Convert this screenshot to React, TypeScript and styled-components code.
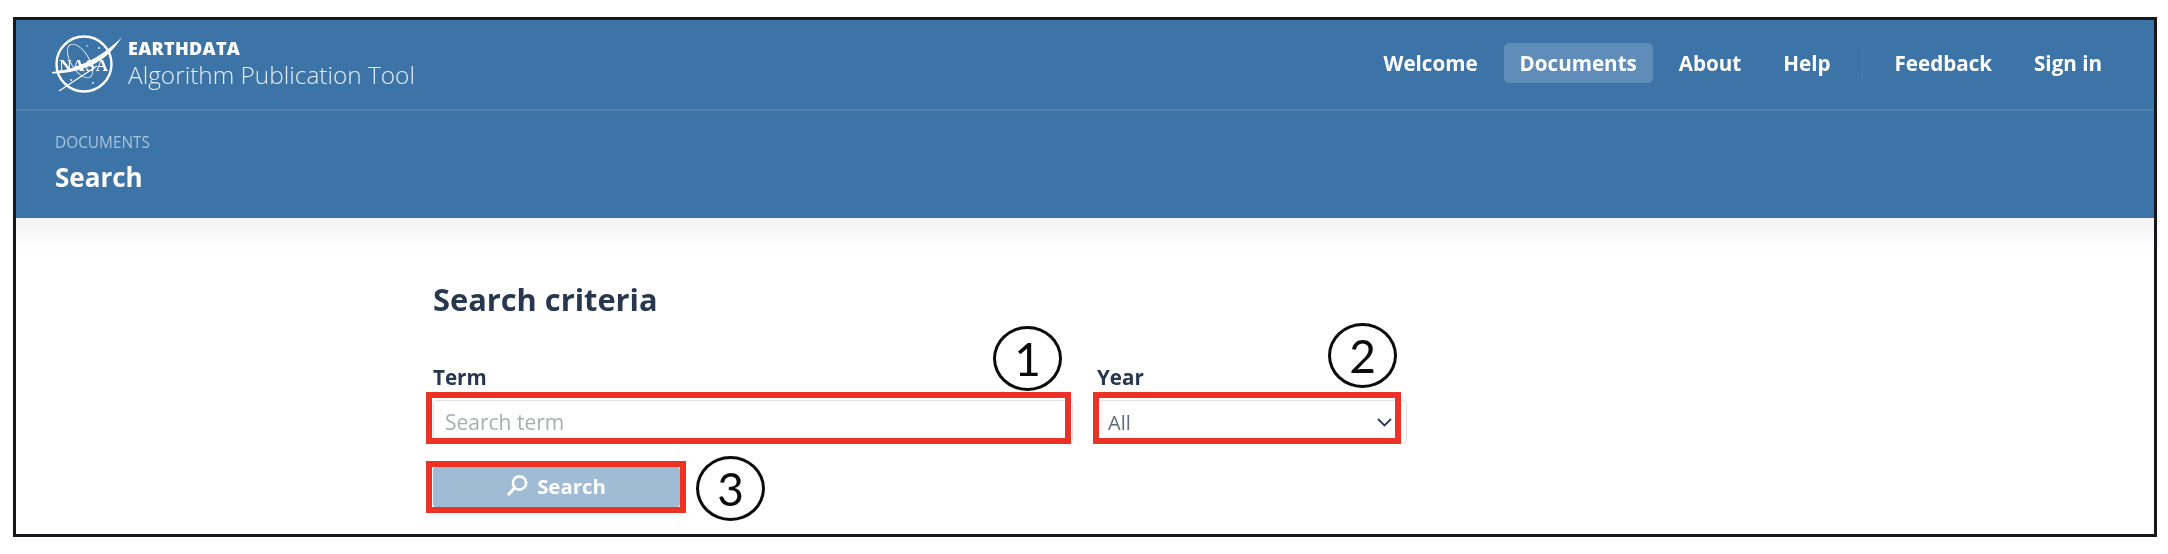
import React from "react";
import styled, { createGlobalStyle } from "styled-components";

const Global = createGlobalStyle`
  html, body { margin: 0; padding: 0; background: #fff; }
  body { font-family: "Open Sans", "Liberation Sans", sans-serif; }
  * { box-sizing: border-box; }
`;

const Frame = styled.div`
  margin: 17px 0 0 13px;
  width: 2144px;
  height: 520px;
  border: 3px solid #16181b;
  background: #fff;
  overflow: hidden;
  filter: blur(0.4px);
`;
const Header = styled.header`
  background: #3d74a7;
  height: 198px;
  color: #fff;
`;
const TopBar = styled.div`
  height: 91px;
  display: flex;
  align-items: center;
  justify-content: space-between;
  padding: 0 36px 0 39px;
  border-bottom: 2px solid #5080ae;
`;
const Brand = styled.div`
  display: flex;
  align-items: center;
  gap: 5px;
  margin-left: -4px;
`;
const BrandText = styled.div`
  display: flex;
  flex-direction: column;
  margin-top: -3px;
`;
const BrandTop = styled.span`
  font-size: 18px;
  font-weight: 800;
  line-height: 23px;
  letter-spacing: 0.3px;
`;
const BrandName = styled.span`
  font-size: 24.4px;
  font-weight: 300;
  line-height: 30px;
  color: #e6edf4;
`;
const Nav = styled.nav`
  display: flex;
  align-items: center;
  margin-top: -3px;
`;
const NavItem = styled.a<{ $active?: boolean }>`
  font-size: 20.6px;
  font-weight: 700;
  line-height: 40px;
  height: 40px;
  padding: 0 16px;
  margin-right: 10px;
  border-radius: 5px;
  color: #fff;
  background: ${(p) => (p.$active ? "#5f8cb8" : "transparent")};
  &:last-child { margin-right: 0; }
`;
const NavDivider = styled.span`
  width: 1px;
  height: 30px;
  background: #4b7eae;
  margin: 0 16px 0 5px;
`;
const SubBar = styled.div`
  padding: 22px 39px 0;
`;
const Crumb = styled.div`
  font-size: 15.4px;
  line-height: 20px;
  color: #a9c3dc;
`;
const PageTitle = styled.h1`
  margin: 7px 0 0;
  font-size: 26px;
  font-weight: 700;
  line-height: 34px;
`;
const Main = styled.main`
  position: relative;
  height: 319px;
  padding: 61px 0 0 417px;
  background: linear-gradient(#f3f3f3 0, #fff 34px);
`;
const Heading = styled.h2`
  margin: 0;
  font-size: 30.8px;
  font-weight: 700;
  line-height: 40px;
  color: #26374f;
`;
const FormRow = styled.div`
  display: flex;
  gap: 24px;
  margin-top: 45px;
`;
const Field = styled.div<{ $w: number }>`
  width: ${(p) => p.$w}px;
`;
const Label = styled.label`
  display: block;
  font-size: 20.6px;
  font-weight: 700;
  line-height: 26px;
  color: #26374f;
`;
const ControlWrap = styled.div`
  position: relative;
  margin-top: 10px;
  height: 44px;
`;
const TextInput = styled.input`
  width: 100%;
  height: 100%;
  border: 1px solid #dfe3e8;
  border-radius: 4px;
  padding: 0 11px;
  font: 400 21px "Open Sans", sans-serif;
  color: #44546a;
  background: #fff;
  &::placeholder { color: #a9adb2; opacity: 1; }
`;
const Select = styled.select`
  width: 100%;
  height: 100%;
  border: 1px solid #dfe3e8;
  border-radius: 4px;
  padding: 0 10px;
  appearance: none;
  font: 400 20px "Open Sans", sans-serif;
  color: #5d6b7e;
  background: #fff;
`;
const Chevron = styled.svg`
  position: absolute;
  right: 15px;
  top: 18px;
  width: 15px;
  height: 9px;
`;
const RedBox = styled.span<{ $t: number; $r: number; $b: number; $l: number }>`
  position: absolute;
  top: ${(p) => p.$t}px;
  right: ${(p) => p.$r}px;
  bottom: ${(p) => p.$b}px;
  left: ${(p) => p.$l}px;
  border: 6px solid #ec3224;
  pointer-events: none;
`;
const Badge = styled.span<{ $t: number; $r: number }>`
  position: absolute;
  top: ${(p) => p.$t}px;
  right: ${(p) => p.$r}px;
  width: 69px;
  height: 65px;
  border: 3px solid #0b0b0b;
  border-radius: 50%;
  display: flex;
  align-items: center;
  justify-content: center;
  font: 400 46px "Lato", sans-serif;
  color: #0b0b0b;
  background: transparent;
`;
const ButtonWrap = styled.div`
  position: relative;
  width: 247px;
  height: 40px;
  margin-top: 23px;
`;
const SearchButton = styled.button`
  width: 100%;
  height: 100%;
  border: 0;
  border-radius: 3px;
  padding: 0 0 3px;
  background: #a0bcd5;
  color: #fff;
  font: 700 20.4px "Open Sans", sans-serif;
  display: flex;
  align-items: center;
  justify-content: center;
  gap: 9px;
`;

const NasaLogo = () => (
  <svg width="72" height="62" viewBox="0 0 72 62" fill="none">
    <circle cx="33" cy="30" r="27.5" stroke="#fff" strokeWidth="2.4" />
    <path d="M1 38 C22 36 48 26 71 3 C58 24 38 39 1 39.5Z" fill="#fff" />
    <ellipse cx="29" cy="27" rx="9" ry="19" transform="rotate(-32 29 27)" stroke="#dfe8f1" strokeWidth="0.9" />
    <path d="M8 57 L46 32" stroke="#fff" strokeWidth="1.2" />
    <text x="33" y="37" textAnchor="middle" fontFamily="Liberation Serif, serif" fontWeight="700" fontSize="17" letterSpacing="0.8" fill="#fff">NASA</text>
    <circle cx="48" cy="14" r="0.9" fill="#fff" /><circle cx="20" cy="46" r="0.9" fill="#fff" /><circle cx="42" cy="49" r="0.9" fill="#fff" /><circle cx="36" cy="12" r="0.8" fill="#fff" />
  </svg>
);

const SearchIcon = () => (
  <svg width="21" height="21" viewBox="0 0 21 21" fill="none" stroke="#fff" strokeWidth="2.6">
    <circle cx="12.5" cy="8" r="6.6" />
    <path d="M7.5 13 L2 19" strokeWidth="3.2" strokeLinecap="round" />
  </svg>
);

export default function App() {
  return (
    <>
      <Global />
      <Frame>
        <Header>
          <TopBar>
            <Brand>
              <NasaLogo />
              <BrandText>
                <BrandTop>EARTHDATA</BrandTop>
                <BrandName>Algorithm Publication Tool</BrandName>
              </BrandText>
            </Brand>
            <Nav>
              <NavItem>Welcome</NavItem>
              <NavItem $active>Documents</NavItem>
              <NavItem>About</NavItem>
              <NavItem>Help</NavItem>
              <NavDivider />
              <NavItem>Feedback</NavItem>
              <NavItem>Sign in</NavItem>
            </Nav>
          </TopBar>
          <SubBar>
            <Crumb>DOCUMENTS</Crumb>
            <PageTitle>Search</PageTitle>
          </SubBar>
        </Header>
        <Main>
          <Heading>Search criteria</Heading>
          <FormRow>
            <Field $w={640}>
              <Label>Term</Label>
              <ControlWrap>
                <TextInput placeholder="Search term" />
                <RedBox $t={-8} $r={2} $b={0} $l={-7} />
                <Badge $t={-74} $r={11}>1</Badge>
              </ControlWrap>
            </Field>
            <Field $w={310}>
              <Label>Year</Label>
              <ControlWrap>
                <Select defaultValue="All"><option>All</option></Select>
                <Chevron viewBox="0 0 15 9" fill="none" stroke="#2a3a55" strokeWidth="1.8"><path d="M1 1 L7.5 7.5 L14 1" /></Chevron>
                <RedBox $t={-8} $r={6} $b={0} $l={-4} />
                <Badge $t={-77} $r={10}>2</Badge>
              </ControlWrap>
            </Field>
          </FormRow>
          <ButtonWrap>
            <SearchButton><SearchIcon />Search</SearchButton>
            <RedBox $t={-6} $r={-6} $b={-6} $l={-7} />
            <Badge $t={-11} $r={-85}>3</Badge>
          </ButtonWrap>
        </Main>
      </Frame>
    </>
  );
}
